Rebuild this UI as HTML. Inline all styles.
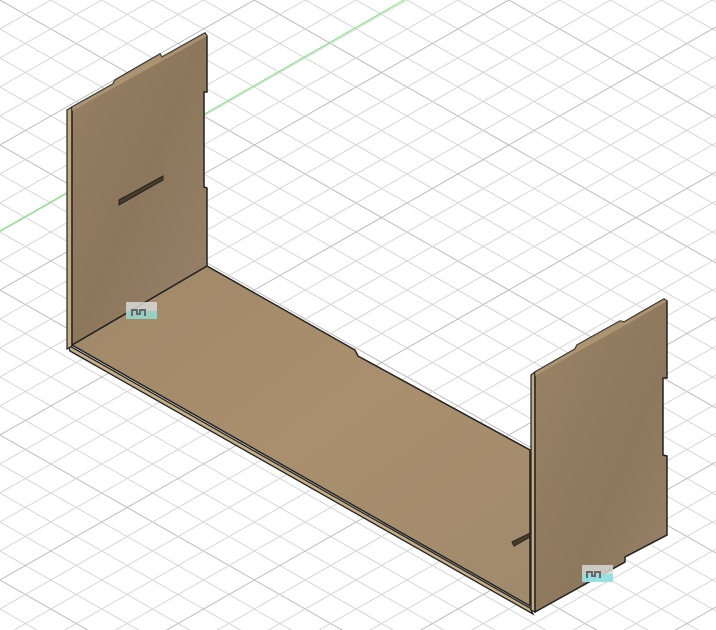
<!DOCTYPE html>
<html><head><style>
html,body{margin:0;padding:0;background:#fff;width:716px;height:630px;overflow:hidden}
svg{display:block;position:absolute;left:0;top:0}
</style></head><body>
<svg id="s" width="716" height="630" viewBox="0 0 716 630" xmlns="http://www.w3.org/2000/svg">
<defs>
<linearGradient id="wl" x1="0" y1="0" x2="1" y2="1">
<stop offset="0" stop-color="#978064"/><stop offset="0.5" stop-color="#8c775c"/><stop offset="1" stop-color="#98816a"/>
</linearGradient>
<linearGradient id="wf" x1="0" y1="0" x2="1" y2="1">
<stop offset="0" stop-color="#a08767"/><stop offset="0.5" stop-color="#a98f6d"/><stop offset="1" stop-color="#a08a6c"/>
</linearGradient>
<linearGradient id="wr" x1="0" y1="0" x2="1" y2="1">
<stop offset="0" stop-color="#9a8366"/><stop offset="0.6" stop-color="#8d785d"/><stop offset="1" stop-color="#988268"/>
</linearGradient>
</defs>
<g id="grid" stroke="#d6d6d6" stroke-width="1"></g>
<line x1="0" y1="231" x2="404" y2="0" stroke="#7de07d" stroke-width="1"/>
<polygon points="68,345 530,608 533,614 70,351" fill="#c6ae86" stroke="#222" stroke-width="1.3"/>
<polygon points="72,345 207,266 355,350 358,356 530,450 530,606" fill="url(#wf)" stroke="#222" stroke-width="1.5"/>
<polygon points="67,110 72,107 72,346 67,349" fill="#c4aa80" stroke="#222" stroke-width="1.2"/>
<polygon points="72,107 113,84 115,80 160,54 162,57 205,33 207,36 207,92 204,92 204,187 207,188 207,266 72,345" fill="url(#wl)" stroke="#222" stroke-width="1.5"/>
<polygon points="72,107 113,84 115,80 160,54 162,57 205,33 207,36 162,61 115,87 72,111" fill="#c2a780" opacity="0.55"/>
<polygon points="119,200 163,176 163,180 119,205" fill="#4a3b2a" stroke="#222" stroke-width="1"/>
<polygon points="531,375 535,372 535,612 531,610" fill="#c4aa80" stroke="#222" stroke-width="1.2"/>
<polygon points="535,372 575,349 577,345 620,321 624,322 664,299 667,301 667,378 663,378 663,455 667,456 667,535 625,557 625,562 535,612" fill="url(#wr)" stroke="#222" stroke-width="1.5"/>
<polygon points="535,372 575,349 577,345 620,321 624,322 664,299 667,301 624,326 577,352 535,376" fill="#c2a780" opacity="0.55"/>
<polygon points="512,542 530,533 530,537 514,546" fill="#4a3b2a" stroke="#222" stroke-width="1"/>
<rect x="126" y="302" width="31" height="17" fill="#d8d8d8" opacity="0.85"/>
<rect x="126" y="311" width="31" height="8" fill="#8ecfc4" opacity="0.85"/>
<path d="M132 316v-6h5v4h3v-4h5v6" fill="none" stroke="#666" stroke-width="2"/>
<rect x="582" y="565" width="31" height="17" fill="#d8d8d8" opacity="0.85"/>
<rect x="582" y="574" width="31" height="8" fill="#8ee0e0" opacity="0.85"/>
<path d="M587 578v-6h5v4h3v-4h5v6" fill="none" stroke="#666" stroke-width="2"/>
</svg>
<script>
var g=document.getElementById('grid'),ns='http://www.w3.org/2000/svg',m=0.57,sp=29;
for(var i=-40;i<60;i++){
 var c=i*sp;
 var a=document.createElementNS(ns,'line');a.setAttribute('x1',0);a.setAttribute('y1',c);a.setAttribute('x2',716);a.setAttribute('y2',c+716*m);
 var b=document.createElementNS(ns,'line');b.setAttribute('x1',0);b.setAttribute('y1',c);b.setAttribute('x2',716);b.setAttribute('y2',c-716*m);
 if(i%5==0){a.setAttribute('stroke','#bdbdbd');b.setAttribute('stroke','#bdbdbd');}
 g.appendChild(a);g.appendChild(b);
}
</script>
</body></html>
